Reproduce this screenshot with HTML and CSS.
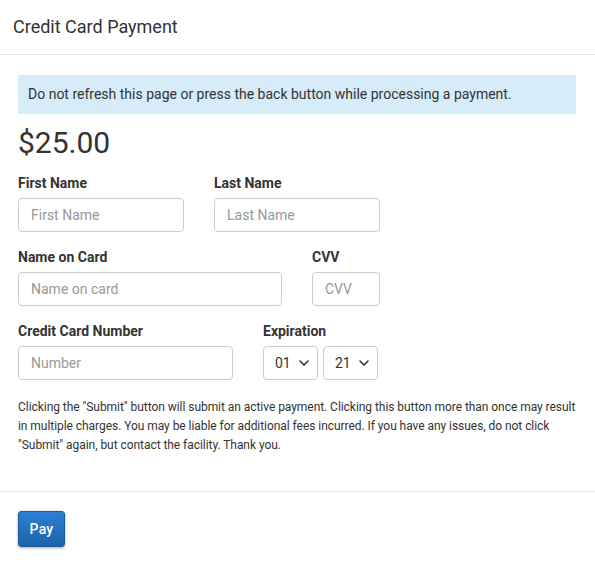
FILE: index.html
```html
<!DOCTYPE html>
<html>
<head>
<meta charset="utf-8">
<link rel="stylesheet" href="styles.css">
</head>
<body>
<div class="header">Credit Card Payment</div>
<div class="content">
  <div class="alert">Do not refresh this page or press the back button while processing a payment.</div>
  <div class="amount">$25.00</div>
  <div class="row">
    <div class="field w166">
      <label class="label">First Name</label>
      <input class="input" placeholder="First Name">
    </div>
    <div class="field w166">
      <label class="label">Last Name</label>
      <input class="input" placeholder="Last Name">
    </div>
  </div>
  <div class="row">
    <div class="field w264">
      <label class="label">Name on Card</label>
      <input class="input" placeholder="Name on card">
    </div>
    <div class="field w68">
      <label class="label">CVV</label>
      <input class="input" placeholder="CVV">
    </div>
  </div>
  <div class="row">
    <div class="field w215">
      <label class="label">Credit Card Number</label>
      <input class="input" placeholder="Number">
    </div>
    <div class="field">
      <label class="label">Expiration</label>
      <div class="selects">
        <div class="select-wrap">
          <select class="select"><option>01</option></select>
          <svg class="chev" width="10" height="6" viewBox="0 0 10 6"><path d="M1 1 L5 5 L9 1" fill="none" stroke="#333" stroke-width="1.6" stroke-linecap="round" stroke-linejoin="round"/></svg>
        </div>
        <div class="select-wrap">
          <select class="select"><option>21</option></select>
          <svg class="chev" width="10" height="6" viewBox="0 0 10 6"><path d="M1 1 L5 5 L9 1" fill="none" stroke="#333" stroke-width="1.6" stroke-linecap="round" stroke-linejoin="round"/></svg>
        </div>
      </div>
    </div>
  </div>
  <p class="notice">Clicking the "Submit" button will submit an active payment. Clicking this button more than once may result in multiple charges. You may be liable for additional fees incurred. If you have any issues, do not click "Submit" again, but contact the facility. Thank you.</p>
</div>
<div class="footer">
  <button class="pay">Pay</button>
</div>
</body>
</html>
```
FILE: styles.css
```css
* { box-sizing: border-box; }
body {
  margin: 0;
  font-family: Roboto, "Liberation Sans", sans-serif;
  color: #333;
  background: #fff;
}
.header {
  padding: 15px 13px;
  font-size: 18px;
  line-height: 24px;
  color: #333;
  border-bottom: 1px solid #e5e5e5;
  height: 55px;
}
.content {
  padding: 20px 15px 0 18px;
  border-bottom: 1px solid #e5e5e5;
}
.alert {
  background: #d6ecf8;
  padding: 10px 10px;
  font-size: 14px;
  line-height: 19px;
  color: #333;
  margin-right: 4px;
}
.amount {
  margin-top: 11px;
  font-size: 30px;
  line-height: 36px;
  color: #333;
}
.row {
  display: flex;
  gap: 30px;
  margin-top: 12px;
}
.row + .row { margin-top: 15px; }
.field {
  display: flex;
  flex-direction: column;
  gap: 5px;
}
.w166 { width: 166px; }
.w264 { width: 264px; }
.w68 { width: 68px; }
.w215 { width: 215px; }
.label {
  font-size: 14px;
  font-weight: 700;
  line-height: 20px;
  color: #333;
}
.input {
  height: 34px;
  width: 100%;
  border: 1px solid #ccc;
  border-radius: 4px;
  padding: 0 12px;
  font-family: inherit;
  font-size: 14px;
  color: #333;
  outline: none;
}
.input::placeholder { color: #999; }
.selects {
  display: flex;
  gap: 5px;
}
.select-wrap {
  position: relative;
  width: 55px;
  height: 34px;
}
.select {
  appearance: none;
  -webkit-appearance: none;
  width: 100%;
  height: 100%;
  border: 1px solid #ccc;
  border-radius: 4px;
  background: #fff;
  padding: 0 0 0 11px;
  font-family: inherit;
  font-size: 14px;
  color: #333;
}
.chev {
  position: absolute;
  right: 9px;
  top: 14px;
  pointer-events: none;
}
.notice {
  margin: 18px 0 0;
  padding-bottom: 36px;
  font-size: 12px;
  line-height: 19px;
  letter-spacing: -0.05px;
  color: #333;
}
.footer {
  padding: 19px 18px;
}
.pay {
  width: 47px;
  height: 36px;
  border: 1px solid #1b5a9c;
  border-radius: 3px;
  background: linear-gradient(#2e80d4, #1d62aa);
  color: #fff;
  font-family: inherit;
  font-size: 14px;
  font-weight: 500;
  letter-spacing: 0.3px;
  box-shadow: 0 1px 3px rgba(0,0,0,0.35);
  padding: 0;
}
```
